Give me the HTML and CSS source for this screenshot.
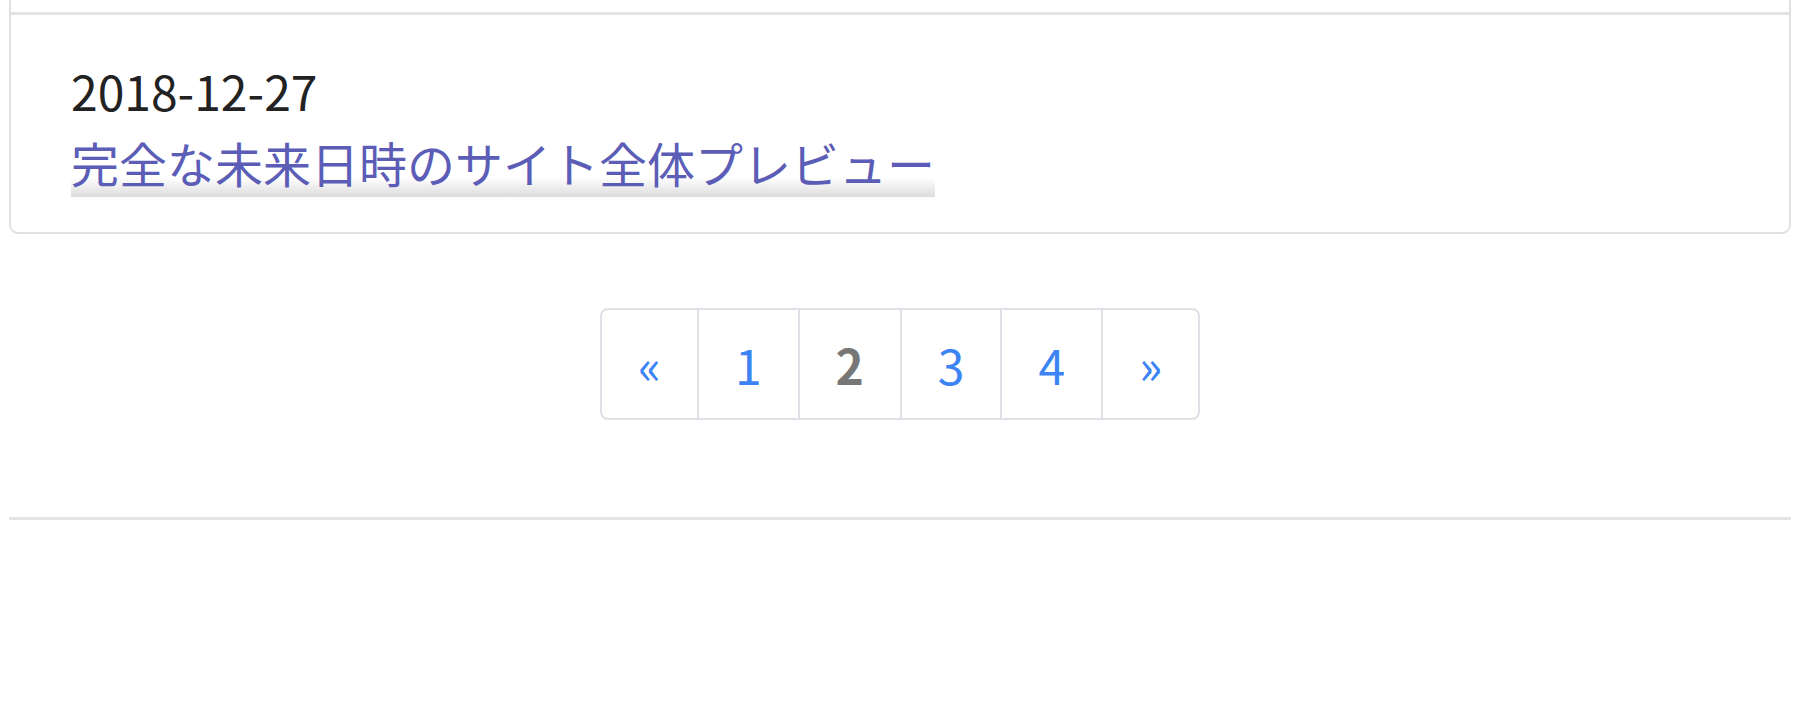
FILE: index.html
```html
<!DOCTYPE html>
<html lang="ja">
<head>
<meta charset="utf-8">
<title>Posts</title>
<link rel="stylesheet" href="styles.css">
</head>
<body>
<div class="page">
  <div class="card">
    <div class="item item-prev"></div>
    <div class="item item-post">
      <div class="post-date">2018-12-27</div>
      <div class="post-title"><a class="post-link" href="#">完全な未来日時のサイト全体プレビュー</a></div>
    </div>
  </div>
  <nav class="pager">
    <ul class="pagination">
      <li class="page-item"><a class="page-link" href="#">«</a></li>
      <li class="page-item"><a class="page-link" href="#">1</a></li>
      <li class="page-item active"><span class="page-link">2</span></li>
      <li class="page-item"><a class="page-link" href="#">3</a></li>
      <li class="page-item"><a class="page-link" href="#">4</a></li>
      <li class="page-item"><a class="page-link" href="#">»</a></li>
    </ul>
  </nav>
  <hr class="rule">
</div>
</body>
</html>
```

FILE: styles.css
```css
html, body {
  margin: 0;
  padding: 0;
  background: #ffffff;
}
body {
  font-family: "Noto Sans CJK JP", "Noto Sans", sans-serif;
  font-size: 48px;
  line-height: 1.5;
  color: #222222;
}
.page {
  padding: 0 9px;
}
.card {
  border: 2px solid #e1e1e1;
  border-top: none;
  border-radius: 0 0 9px 9px;
}
.item-prev {
  height: 12px;
}
.item-post {
  border-top: 3px solid #e3e3e3;
  padding: 39px 60px 34px;
}
.post-date {
  color: #222222;
}
.post-link {
  color: #5b5db6;
  text-decoration: none;
  background-image: linear-gradient(to bottom, rgba(255,255,255,0) 72%, #dcdcdc 100%);
}
.pager {
  display: flex;
  justify-content: center;
  margin-top: 74px;
}
.pagination {
  display: flex;
  list-style: none;
  margin: 0;
  padding: 0;
}
.page-link {
  display: block;
  padding: 18px 36px;
  border: 2px solid #dee2e6;
  margin-left: -2px;
  color: #3c84f4;
  text-decoration: none;
  background: #fff;
}
.page-item:first-child .page-link {
  margin-left: 0;
  border-radius: 8px 0 0 8px;
}
.page-item:last-child .page-link {
  border-radius: 0 8px 8px 0;
}
.page-item.active .page-link {
  color: #777777;
  font-weight: 700;
}
.rule {
  margin: 97px 0 0;
  border: none;
  border-top: 3px solid #e5e5e5;
  height: 0;
}
```
